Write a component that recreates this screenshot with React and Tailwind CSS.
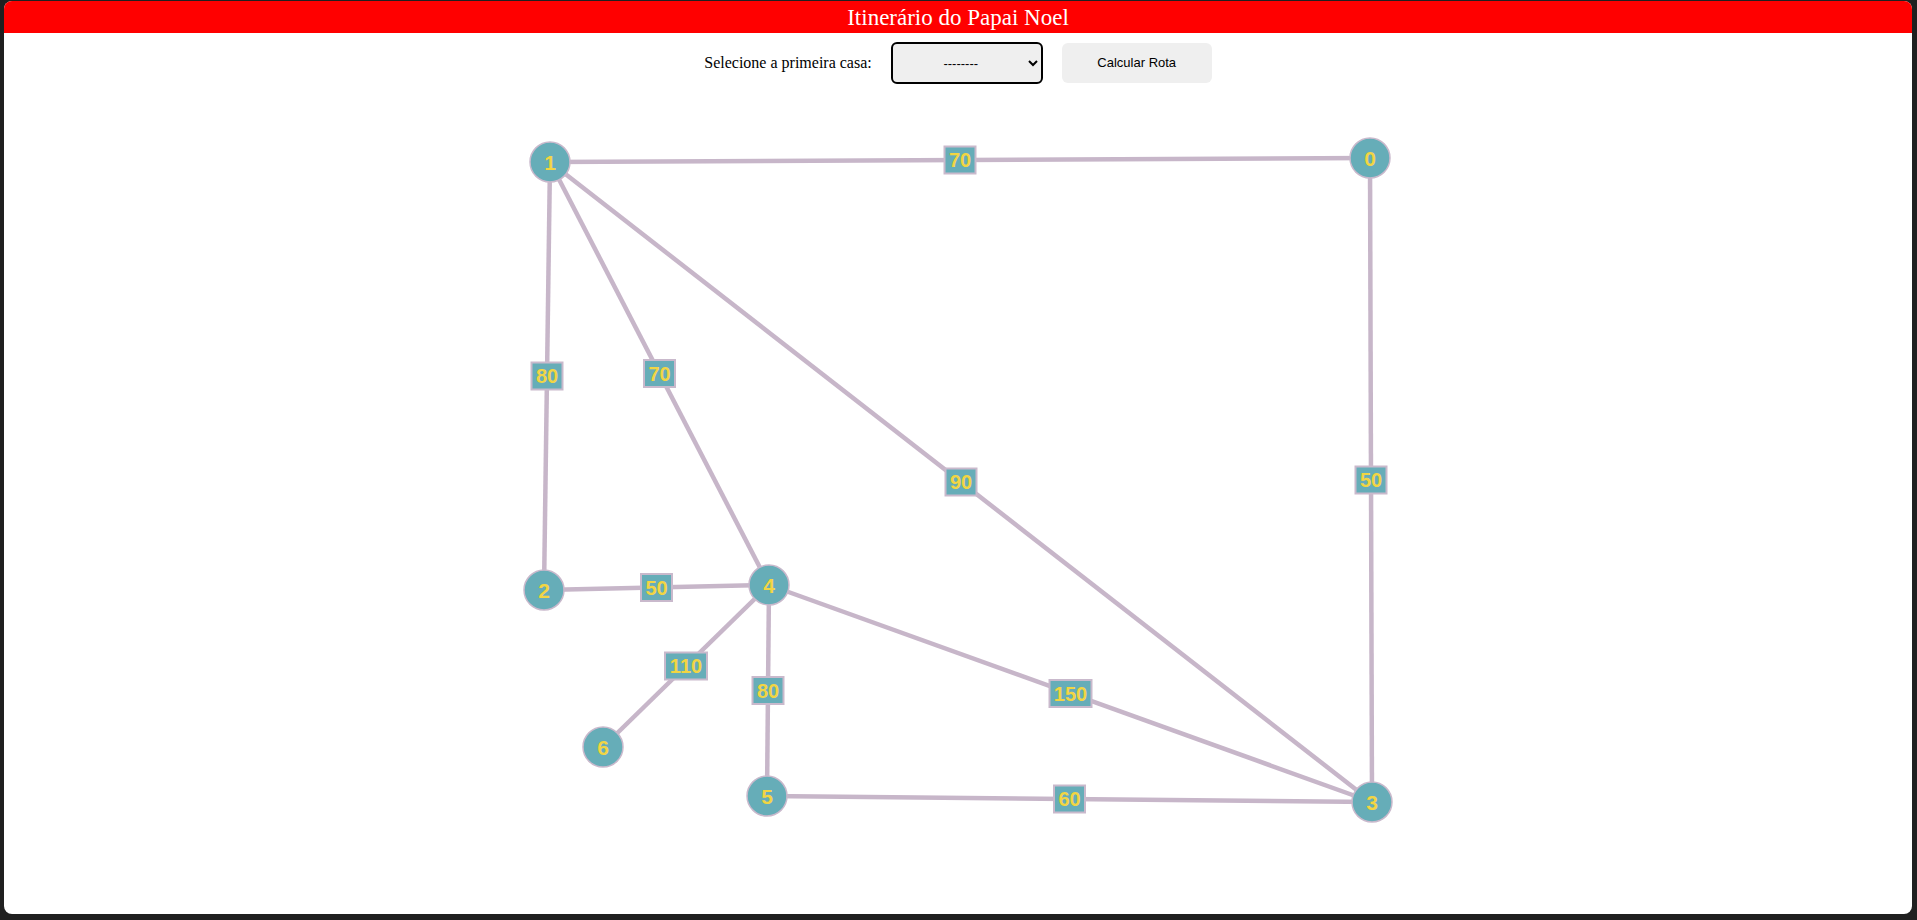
import { useState } from 'react'

const NODES = [
  { id: 0, x: 1370, y: 158 },
  { id: 1, x: 550, y: 162 },
  { id: 2, x: 544, y: 590 },
  { id: 3, x: 1372, y: 802 },
  { id: 4, x: 769, y: 585 },
  { id: 5, x: 767, y: 796 },
  { id: 6, x: 603, y: 747 },
]

const EDGES = [
  { from: 1, to: 0, w: 70 },
  { from: 1, to: 2, w: 80 },
  { from: 1, to: 4, w: 70 },
  { from: 1, to: 3, w: 90 },
  { from: 0, to: 3, w: 50 },
  { from: 2, to: 4, w: 50 },
  { from: 4, to: 6, w: 110 },
  { from: 4, to: 5, w: 80 },
  { from: 4, to: 3, w: 150 },
  { from: 5, to: 3, w: 60 },
]

const byId = id => NODES.find(n => n.id === id)

function Graph() {
  return (
    <svg width="1908" height="818" className="block" style={{ fontFamily: '"Liberation Sans", Arial, sans-serif' }}>
      <g transform="translate(-4,-95)">
        {EDGES.map(e => {
          const a = byId(e.from)
          const b = byId(e.to)
          return (
            <line key={`l${e.from}-${e.to}`} x1={a.x} y1={a.y} x2={b.x} y2={b.y} stroke="#c7b6c9" strokeWidth="4.5" />
          )
        })}
        {EDGES.map(e => {
          const a = byId(e.from)
          const b = byId(e.to)
          const mx = (a.x + b.x) / 2
          const my = (a.y + b.y) / 2
          const txt = String(e.w)
          const w = txt.length * 11 + 9
          return (
            <g key={`t${e.from}-${e.to}`}>
              <rect x={mx - w / 2} y={my - 13.5} width={w} height={27} fill="#66adb8" stroke="#c9b9cc" strokeWidth="2" />
              <text x={mx} y={my + 7} textAnchor="middle" fontSize="20" fontWeight="700" fill="#f2d543">{txt}</text>
            </g>
          )
        })}
        {NODES.map(n => (
          <g key={n.id}>
            <circle cx={n.x} cy={n.y} r="20" fill="#66adb8" stroke="#c9b9cc" strokeWidth="1.5" />
            <text x={n.x} y={n.y + 7.5} textAnchor="middle" fontSize="21" fontWeight="700" fill="#f2d543">{n.id}</text>
          </g>
        ))}
      </g>
    </svg>
  )
}

export default function App() {
  const [start, setStart] = useState('')

  return (
    <div className="w-[1917px] h-[920px] bg-[#202020] pl-[4px] pr-[5px] pt-[1px] pb-[6px]">
      <div className="h-full bg-white rounded-lg overflow-hidden">
        {/* Header */}
        <div className="h-[32px] bg-[#ff0000] flex items-center justify-center">
          <h1 className="text-white text-[23px] leading-none font-['Liberation_Serif',serif]">Itinerário do Papai Noel</h1>
        </div>

        {/* Controls */}
        <div className="flex items-center justify-center mt-[10px] h-[40px]">
          <label className="text-[16px] text-black font-['Liberation_Serif',serif] mr-[19px]">Selecione a primeira casa:</label>
          <select
            value={start}
            onChange={e => setStart(e.target.value)}
            className="w-[152px] h-[42px] bg-[#efefef] border-2 border-black rounded-md text-[13px] text-center font-['Liberation_Sans',Arial,sans-serif] mr-[19px]"
          >
            <option value="">--------</option>
            {NODES.map(n => (
              <option key={n.id} value={n.id}>{n.id}</option>
            ))}
          </select>
          <button className="w-[150px] h-[40px] bg-[#efefef] rounded-md text-[13px] text-black font-['Liberation_Sans',Arial,sans-serif]">
            Calcular Rota
          </button>
        </div>

        <div className="mt-[12px]">
          <Graph />
        </div>
      </div>
    </div>
  )
}
